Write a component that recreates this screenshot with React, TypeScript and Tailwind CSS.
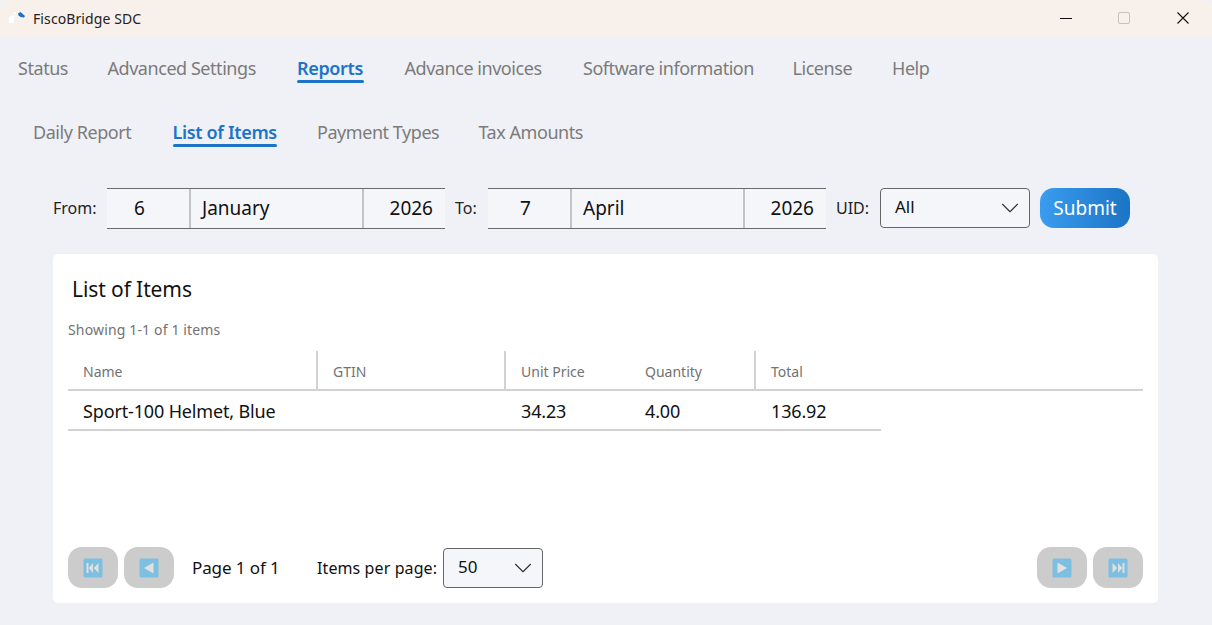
import { ChevronDown } from "lucide-react";

const mainTabs = [
    { label: "Status", width: "w-[49px]" },
    { label: "Advanced Settings", width: "w-[149px]" },
    { label: "Reports", width: "w-[67px]", active: true },
    { label: "Advance invoices", width: "w-[138px]" },
    { label: "Software information", width: "w-[169px]" },
    { label: "License", width: "w-[59px]" },
    { label: "Help", width: "w-[38px]" },
];

const subTabs = [
    { label: "Daily Report", width: "w-[99px]" },
    { label: "List of Items", width: "w-[104px]", active: true },
    { label: "Payment Types", width: "w-[121px]" },
    { label: "Tax Amounts", width: "w-[103px]" },
];

type Tab = { label: string; width: string; active?: boolean };

function TabItem({ tab }: { tab: Tab }) {
    return (
        <div
            className={`${tab.width} relative whitespace-nowrap text-[18px] leading-[26px] ${
                tab.active ? "font-semibold tracking-[-0.35px] text-[#1b74c9]" : "tracking-[-0.45px] text-[#7b7b7b]"
            }`}
        >
            {tab.label}
            {tab.active && (
                <div className="absolute -bottom-[2px] left-0 right-0 h-[3px] rounded-full bg-[#1b74c9]" />
            )}
        </div>
    );
}

function DateBox({
    day,
    dayPad,
    month,
    year,
}: {
    day: string;
    dayPad: string;
    month: string;
    year: string;
}) {
    return (
        <div className="flex h-[41px] w-[338px] border-y border-[#6a6a6a] bg-[#f5f6fa] text-[19px] leading-[38px] tracking-normal text-[#111]">
            <div className={`w-[82px] ${dayPad}`}>{day}</div>
            <div className="w-[173px] border-l-2 border-[#c4c4c4] pl-[11px]">{month}</div>
            <div className="flex-1 border-l-2 border-[#c4c4c4] pr-[12px] text-right">{year}</div>
        </div>
    );
}

function PagerIcon({ kind }: { kind: "first" | "prev" | "next" | "last" }) {
    return (
        <svg width="20" height="20" viewBox="0 0 20 20">
            <rect x="0.5" y="0.5" width="19" height="19" rx="1.5" fill="#7cbfe0" />
            {kind === "first" && (
                <path d="M3.5 5h2v10h-2zM10 5v10l-4.200-5zM15.500 5v10L10.800 10z" fill="#e0e0e0" />
            )}
            {kind === "prev" && <path d="M14.500 4.500v11L5 10z" fill="#e0e0e0" />}
            {kind === "next" && <path d="M5.500 4.500v11L15 10z" fill="#e0e0e0" />}
            {kind === "last" && (
                <path d="M16.500 5h-2v10h2zM10 5v10l4.200-5zM4.500 5v10L9.200 10z" fill="#e0e0e0" />
            )}
        </svg>
    );
}

function PagerButton({ kind }: { kind: "first" | "prev" | "next" | "last" }) {
    return (
        <button
            type="button"
            className="flex h-[41px] w-[50px] items-center justify-center rounded-[14px] bg-[#cccccc]"
        >
            <PagerIcon kind={kind} />
        </button>
    );
}

function Select({ value, width }: { value: string; width: string }) {
    return (
        <div
            className={`${width} flex h-[40px] shrink-0 items-center justify-between rounded-[4px] border border-[#666] bg-[#f5f6fa] pl-[14px] pr-[4px] text-[17px] tracking-normal text-[#111]`}
        >
            <span className="-mt-[2px]">{value}</span>
            <ChevronDown size={30} strokeWidth={0.9} className="text-[#333]" />
        </div>
    );
}

export default function App() {
    return (
        <div
            className="flex h-[625px] w-[1212px] flex-col overflow-hidden bg-[#f0f1f6]"
            style={{ fontFamily: '"Noto Sans", "Open Sans", sans-serif' }}
        >
            {/* title bar */}
            <div className="flex h-[38px] items-center rounded-t-[8px] bg-[#f8f0ea]">
                <svg width="18" height="12" viewBox="0 0 18 12" className="mb-[2px] ml-[8px]">
                    <path d="M1 5l6-2v2l-1 1v5H1z" fill="#ffffff" />
                    <path d="M4 1l4-1v2z" fill="#ffffff" />
                    <path d="M10 1.500l2.500-1.500L17 4l-1 1.500-3.500-.5-2-1.500z" fill="#1b6fc4" />
                </svg>
                <div className="mb-[2px] ml-[7px] text-[14px] tracking-[0.1px] text-[#222]">FiscoBridge SDC</div>
                <div className="mb-[2px] ml-auto flex items-center">
                    <div className="h-[1px] w-[12px] bg-[#111]" />
                    <div className="ml-[46px] h-[12px] w-[12px] rounded-[2px] border border-[#c4c4c4]" />
                    <svg width="12" height="12" viewBox="0 0 12 12" className="ml-[47px] mr-[23px]">
                        <path d="M.5.5l11 11M11.500.5l-11 11" stroke="#111" strokeWidth="1.1" fill="none" />
                    </svg>
                </div>
            </div>

            {/* main tabs */}
            <div className="mt-[17px] flex gap-[40.500px] pl-[18px]">
                {mainTabs.map((tab) => (
                    <TabItem key={tab.label} tab={tab} />
                ))}
            </div>

            {/* sub tabs */}
            <div className="mt-[38px] flex gap-[40.500px] pl-[33px]">
                {subTabs.map((tab) => (
                    <TabItem key={tab.label} tab={tab} />
                ))}
            </div>

            {/* filters */}
            <div className="mt-[43px] flex h-[41px] items-start pl-[53px] text-[16px] leading-[40px] text-[#222]">
                <div className="w-[54px]">From:</div>
                <DateBox day="6" dayPad="pl-[27px]" month="January" year="2026" />
                <div className="ml-[10px] w-[33px]">To:</div>
                <DateBox day="7" dayPad="pl-[32px]" month="April" year="2026" />
                <div className="ml-[10px] w-[44px]">UID:</div>
                <Select value="All" width="w-[150px]" />
                <button
                    type="button"
                    className="ml-[10px] h-[40px] w-[90px] rounded-[14px] bg-gradient-to-r from-[#3a9cf0] to-[#1b74c4] text-[19px] leading-[40px] text-white"
                >
                    Submit
                </button>
            </div>

            {/* card */}
            <div className="ml-[53px] mt-[25px] flex h-[349px] w-[1105px] flex-col rounded-[5px] bg-white px-[15px] pb-[15px]">
                <div className="mt-[20px] pl-[4px] text-[21px] leading-[30px] tracking-[-0.1px] text-[#111]">
                    List of Items
                </div>
                <div className="mt-[16px] text-[14px] leading-[20px] tracking-[0.15px] text-[#727272]">
                    Showing 1-1 of 1 items
                </div>

                <div className="mt-[11px] flex h-[40px] border-b-2 border-[#d2d2d2] text-[14px] leading-[41px] text-[#727272]">
                    <div className="w-[250px] border-r-2 border-[#d2d2d2] pl-[15px]">Name</div>
                    <div className="w-[188px] border-r-2 border-[#d2d2d2] pl-[15px]">GTIN</div>
                    <div className="w-[124px] pl-[15px]">Unit Price</div>
                    <div className="w-[126px] border-r-2 border-[#d2d2d2] pl-[15px]">Quantity</div>
                    <div className="pl-[15px]">Total</div>
                </div>
                <div className="flex h-[40px] w-[813px] border-b-2 border-[#d2d2d2] text-[18px] leading-[41px] tracking-[-0.15px] text-[#111]">
                    <div className="w-[250px] whitespace-nowrap pl-[15px]">Sport-100 Helmet, Blue</div>
                    <div className="w-[188px] pl-[15px]" />
                    <div className="w-[124px] pl-[15px]">34.23</div>
                    <div className="w-[126px] pl-[15px]">4.00</div>
                    <div className="pl-[15px]">136.92</div>
                </div>

                {/* pager */}
                <div className="mt-auto flex items-center text-[#111]">
                    <PagerButton kind="first" />
                    <div className="ml-[6px]">
                        <PagerButton kind="prev" />
                    </div>
                    <div className="ml-[18px] w-[125px] text-[17px] tracking-[-0.1px]">Page 1 of 1</div>
                    <div className="w-[126px] whitespace-nowrap text-[16px] tracking-[0.1px]">Items per page:</div>
                    <Select value="50" width="w-[100px]" />
                    <div className="ml-auto flex gap-[6px]">
                        <PagerButton kind="next" />
                        <PagerButton kind="last" />
                    </div>
                </div>
            </div>
        </div>
    );
}
